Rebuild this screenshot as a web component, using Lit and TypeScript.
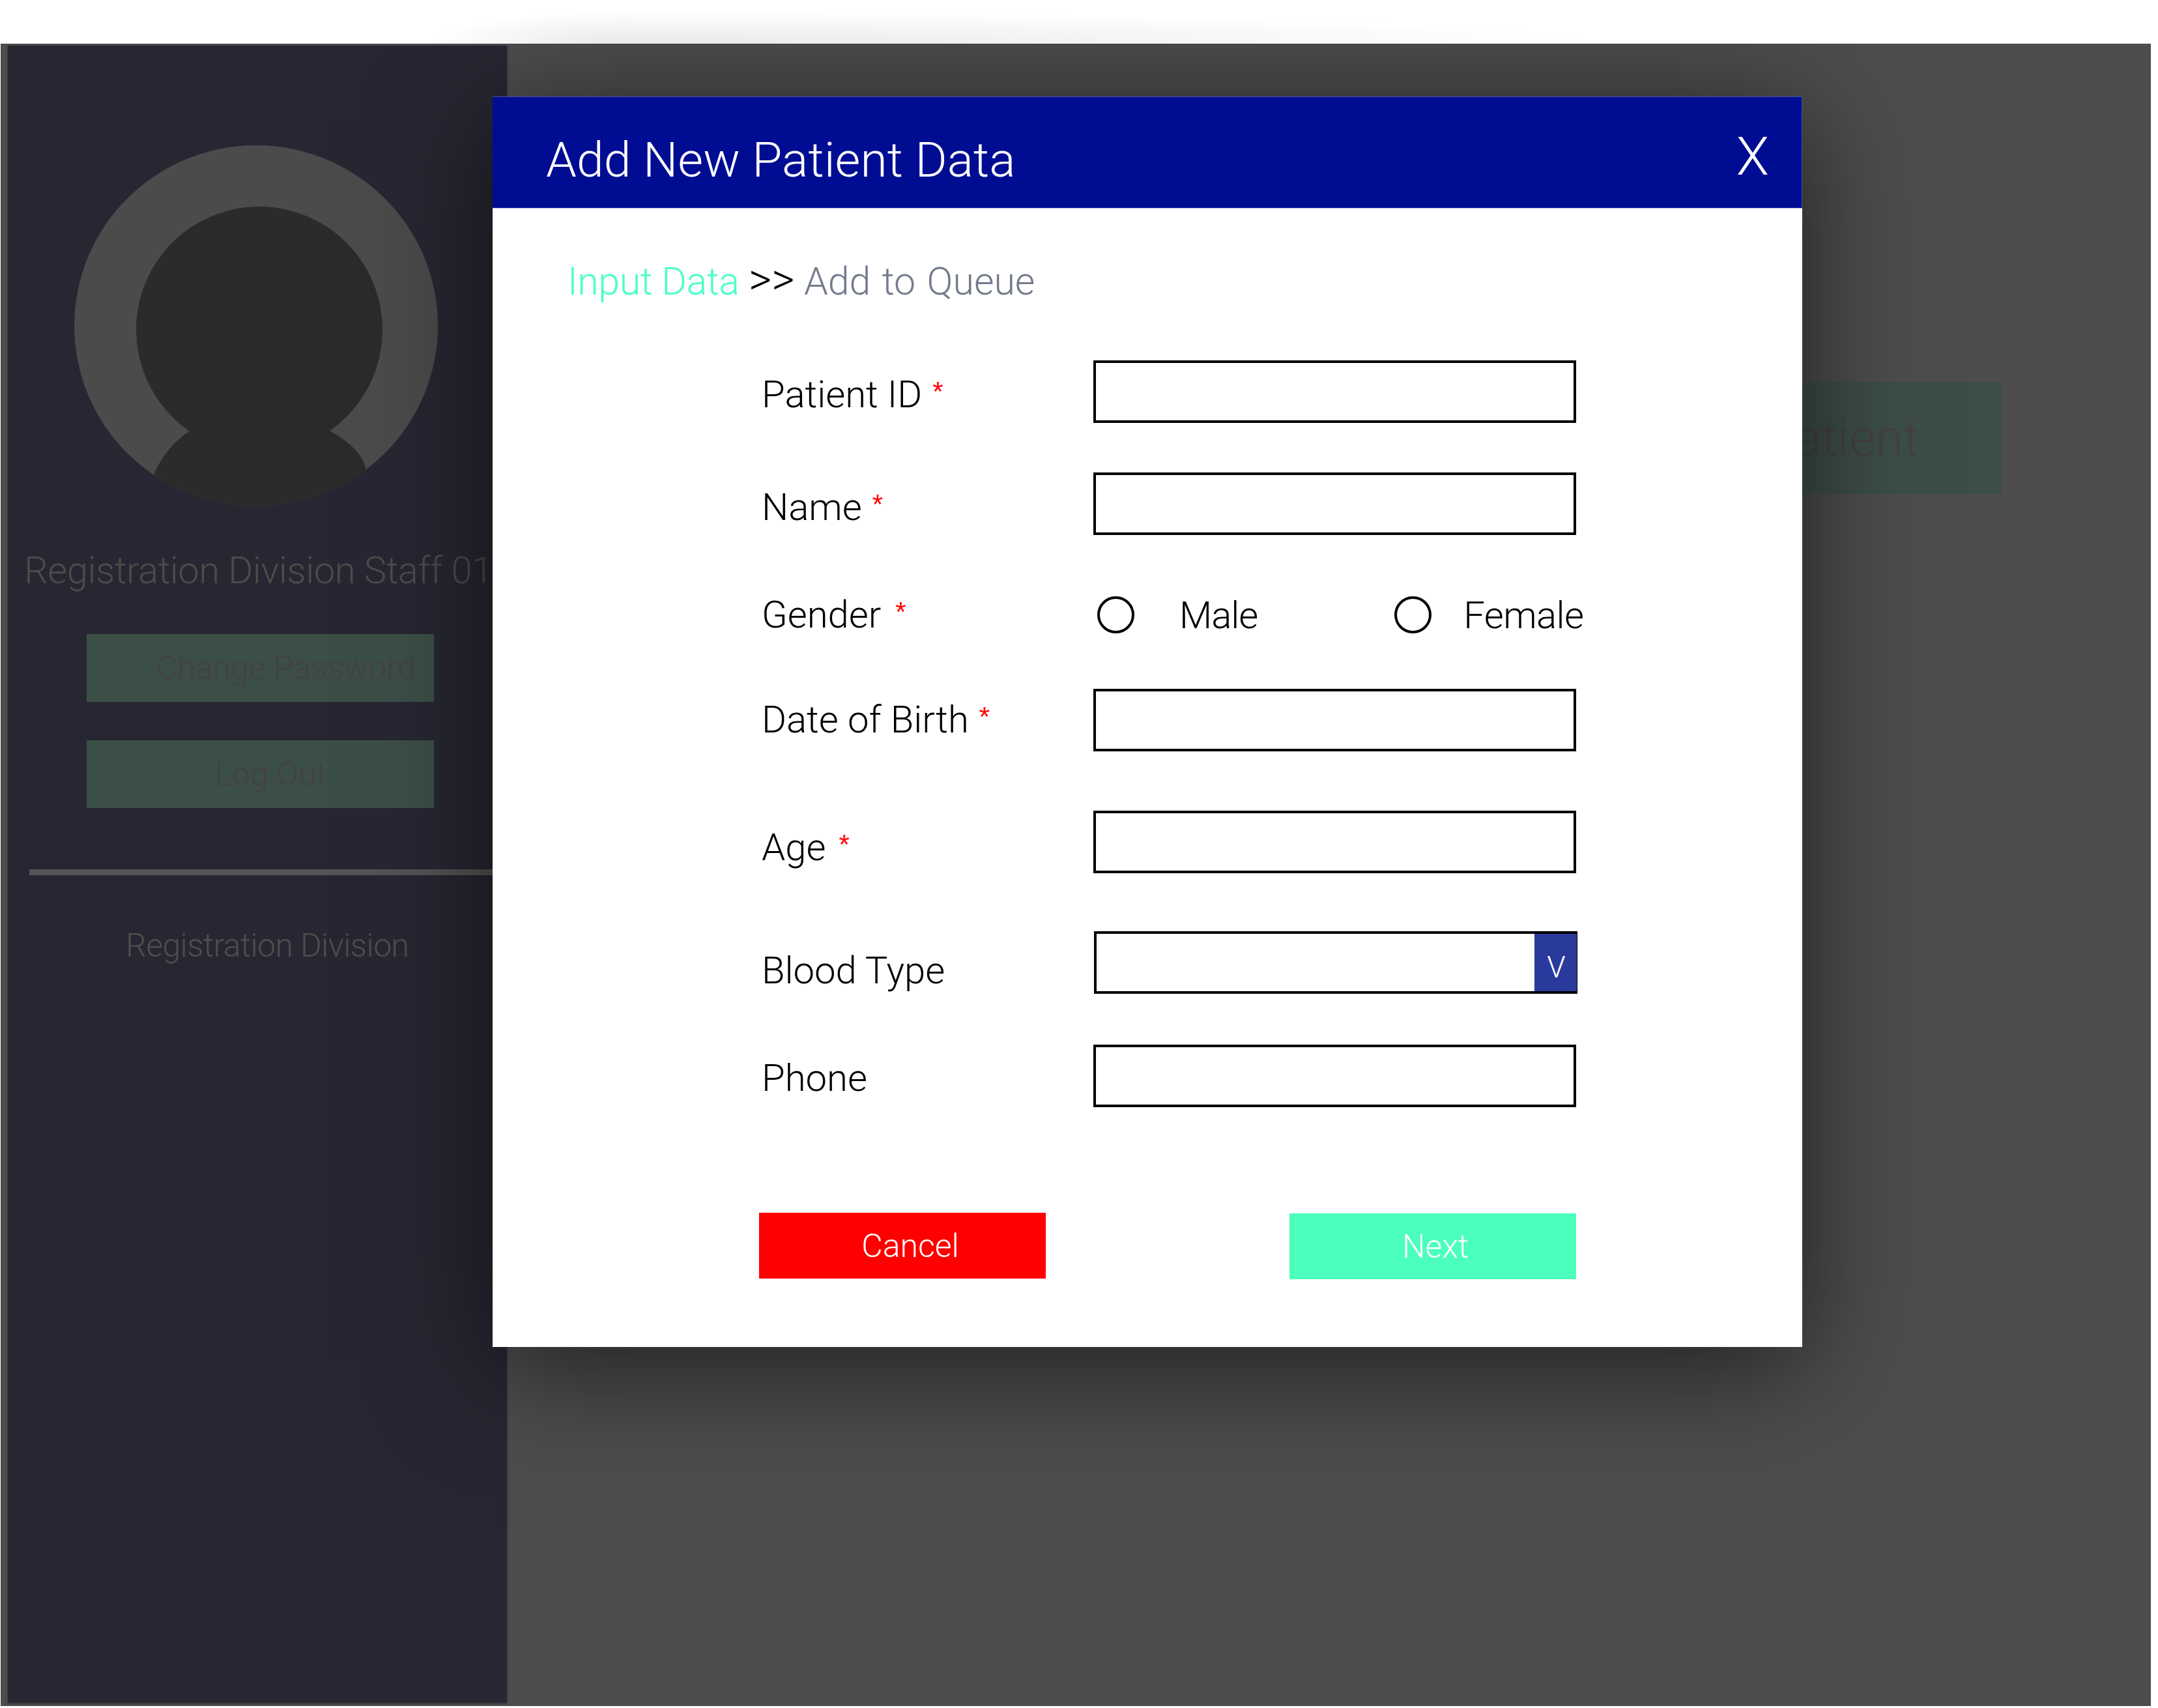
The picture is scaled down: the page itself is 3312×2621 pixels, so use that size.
import {LitElement, html, css} from 'lit';
import {customElement} from 'lit/decorators.js';

// gap = space above the row, nudge = label offset from the row top, starGap = space before the asterisk
const FIELDS = [
  {label: 'Patient ID', required: true, kind: 'text', gap: 0, nudge: 17, starGap: 16},
  {label: 'Name', required: true, kind: 'text', gap: 76, nudge: 18, starGap: 16},
  {label: 'Gender', required: true, kind: 'radio', gap: 95, nudge: -8, starGap: 22},
  {label: 'Date of Birth', required: true, kind: 'text', gap: 79, nudge: 12, starGap: 16},
  {label: 'Age', required: true, kind: 'text', gap: 91, nudge: 21, starGap: 20},
  {label: 'Blood Type', required: false, kind: 'select', gap: 89, nudge: 25, starGap: 0},
  {label: 'Phone', required: false, kind: 'text', gap: 78, nudge: 16, starGap: 0},
];

@customElement('app-root')
export class AppRoot extends LitElement {
  static styles = css`
    :host {
      display: block;
      width: 3312px;
      height: 2621px;
      background: #fff;
      font-family: Roboto, 'Liberation Sans', sans-serif;
      font-weight: 300;
      overflow: hidden;
    }
    /* the faint smear above the dimmed page */
    .smear {
      height: 67px;
      background:
        radial-gradient(ellipse 290px 50px at 290px 100%, #e9e9e9, #e9e9e900) 660px 0 / 290px 67px no-repeat,
        radial-gradient(ellipse 1500px 50px at 0 100%, #e9e9e9, #e9e9e900) 950px 0 / 1500px 67px no-repeat;
    }
    .overlay {
      display: flex;
      box-sizing: border-box;
      position: relative;
      width: 3300px;
      height: 2551px;
      margin-left: 1px;
      padding: 3px 0 5px 11px;
      background: #4d4d4d;
      overflow: hidden;
    }
    .sidebar {
      width: 766px;
      flex: none;
      background: #272733;
      color: #4b4b4b;
      box-shadow: 0 1px 3px rgba(0, 0, 0, 0.4);
    }
    .avatar {
      display: block;
      width: 766px;
      height: 740px;
    }
    .staff {
      margin: 30px 0 0 25px;
      font-size: 58px;
      line-height: 70px;
      letter-spacing: -0.5px;
      white-space: nowrap;
    }
    .side-btn {
      display: flex;
      align-items: center;
      justify-content: center;
      box-sizing: border-box;
      width: 533px;
      height: 104px;
      margin-left: 121px;
      background: #3c4f47;
      color: #444146;
      font-size: 50px;
    }
    .side-btn.change {
      margin-top: 63px;
      padding-left: 78px;
    }
    .side-btn.logout {
      margin-top: 59px;
      padding-left: 32px;
    }
    .divider {
      height: 9px;
      margin: 94px 0 0 33px;
      background: #545454;
    }
    .division {
      margin: 78px 0 0 181px;
      font-size: 50px;
      line-height: 60px;
      letter-spacing: -0.6px;
      color: #4e4e4e;
      white-space: nowrap;
    }
    .content {
      flex: 1;
      display: flex;
      justify-content: flex-end;
      align-items: flex-start;
      padding: 517px 229px 0 0;
    }
    .add-patient {
      display: flex;
      align-items: center;
      justify-content: center;
      width: 820px;
      height: 171px;
      background: #3d4e47;
      color: #444146;
      font-size: 78px;
      white-space: nowrap;
    }
    .modal {
      position: absolute;
      left: 755px;
      top: 81px;
      width: 2010px;
      height: 1919px;
      background: #fff;
      box-shadow: 0 30px 170px rgba(0, 0, 0, 0.6);
    }
    .head {
      display: flex;
      justify-content: space-between;
      box-sizing: border-box;
      height: 172px;
      padding: 0 50px 0 82px;
      background: #000d93;
      border-top: 1px solid #4450a8;
      border-right: 1px solid #4450a8;
      border-bottom: 1px solid #b9c0e0;
      color: #fff;
      font-size: 75px;
    }
    .title {
      margin-top: 51px;
      line-height: 90px;
      letter-spacing: 0.1px;
    }
    .close {
      margin-top: 46px;
      font-size: 82px;
      line-height: 90px;
    }
    .crumbs {
      margin: 77px 0 0 115px;
      font-size: 59px;
      line-height: 70px;
      color: #000;
    }
    .crumbs .on {
      color: #4bffc8;
      letter-spacing: -0.4px;
    }
    .crumbs .sep {
      font-size: 68px;
      line-height: 0;
    }
    .crumbs .off {
      color: #737b8c;
      word-spacing: 3px;
    }
    form {
      display: flex;
      flex-direction: column;
      margin: 86px 0 0 413px;
      width: 1262px;
      color: #000;
      font-size: 58px;
      line-height: 70px;
    }
    .row {
      display: flex;
      align-items: flex-start;
    }
    .label {
      width: 509px;
      flex: none;
    }
    .star {
      color: #f00;
      font-family: 'Liberation Sans', sans-serif;
      font-size: 42px;
      line-height: 0;
      vertical-align: 10px;
    }
    .box {
      box-sizing: border-box;
      width: 741px;
      height: 96px;
      border: 4px solid #000;
      background: #fff;
    }
    .select {
      display: flex;
      justify-content: flex-end;
      width: 742px;
      margin-left: 1px;
      border-right-width: 1px;
    }
    .caret {
      width: 65px;
      box-sizing: border-box;
      padding: 26px 0 0 2px;
      background: #2a3a9c;
      color: #fff;
      font-size: 46px;
      line-height: 50px;
      text-align: center;
    }
    .radios {
      display: flex;
      align-items: center;
      height: 55px;
      margin-left: 6px;
    }
    .radio {
      box-sizing: border-box;
      width: 57px;
      height: 57px;
      border: 4px solid #000;
      border-radius: 50%;
    }
    .radio-text {
      margin-left: 69px;
      letter-spacing: -1px;
    }
    .radio.second {
      margin-left: 210px;
    }
    .radio-text.second {
      margin-left: 49px;
      letter-spacing: -0.6px;
    }
    .actions {
      display: flex;
      justify-content: space-between;
      margin: 162px 0 0 -4px;
      width: 1254px;
      font-size: 50px;
      color: #fff;
    }
    .btn {
      box-sizing: border-box;
      display: flex;
      align-items: center;
      justify-content: center;
      width: 440px;
      height: 101px;
    }
    .cancel {
      background: #f00;
      padding-left: 24px;
    }
    .next {
      margin-top: 1px;
      background: #4bffbc;
      padding-left: 8px;
    }
  `;

  private renderControl(kind: string) {
    if (kind === 'radio') {
      return html`<div class="radios">
        <span class="radio"></span><span class="radio-text">Male</span>
        <span class="radio second"></span><span class="radio-text second">Female</span>
      </div>`;
    }
    if (kind === 'select') {
      return html`<div class="box select"><span class="caret">V</span></div>`;
    }
    return html`<div class="box"></div>`;
  }

  render() {
    return html`
      <div class="smear"></div>
      <div class="overlay">
        <aside class="sidebar">
          <svg class="avatar" viewBox="12 70 766 740">
            <defs>
              <clipPath id="disc"><ellipse cx="393" cy="500" rx="279" ry="277" /></clipPath>
            </defs>
            <ellipse cx="393" cy="500" rx="279" ry="277" fill="#4b4b4b" />
            <circle cx="398" cy="506" r="189" fill="#2b2b2b" />
            <path
              d="M237 725 C252 695 270 674 295 659 L502 659 C535 677 555 695 561 718 L561 790 L237 790 Z"
              fill="#2b2b2b"
              clip-path="url(#disc)"
            />
          </svg>
          <div class="staff">Registration Division Staff 01</div>
          <div class="side-btn change">Change Password</div>
          <div class="side-btn logout">Log Out</div>
          <div class="divider"></div>
          <div class="division">Registration Division</div>
        </aside>
        <main class="content">
          <div class="add-patient">Add New Patient</div>
        </main>
        <section class="modal">
          <header class="head">
            <span class="title">Add New Patient Data</span>
            <span class="close">X</span>
          </header>
          <div class="crumbs">
            <span class="on">Input Data</span> <span class="sep">&gt;&gt;</span> <span class="off">Add to Queue</span>
          </div>
          <form>
            ${FIELDS.map(
              (f) => html`
                <div class="row" style="margin-top:${f.gap}px">
                  <div class="label" style="margin-top:${f.nudge}px">
                    ${f.label}${f.required
                      ? html`<span class="star" style="margin-left:${f.starGap}px">*</span>`
                      : ''}
                  </div>
                  ${this.renderControl(f.kind)}
                </div>
              `
            )}
            <div class="actions">
              <div class="btn cancel">Cancel</div>
              <div class="btn next">Next</div>
            </div>
          </form>
        </section>
      </div>
    `;
  }
}
